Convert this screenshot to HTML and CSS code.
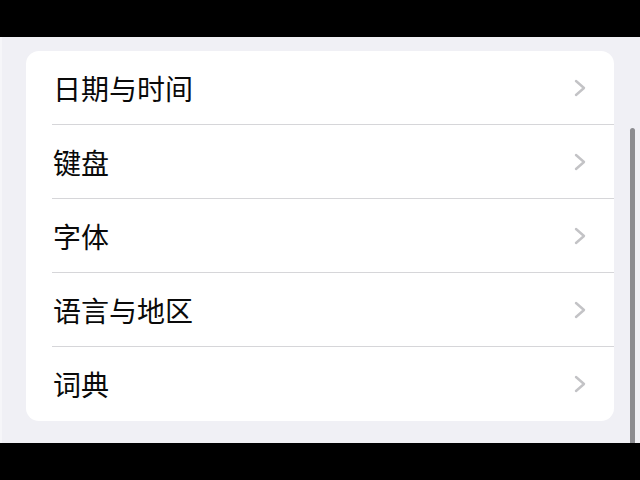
FILE: index.html
```html
<!DOCTYPE html>
<html lang="zh-CN">
<head>
<meta charset="utf-8">
<link rel="stylesheet" href="styles.css">
</head>
<body>
<div class="screen">
  <div class="bar"></div>
  <main class="content">
    <ul class="card">
      <li class="row"><span class="label">日期与时间</span><svg class="chev" viewBox="0 0 12 18"><path d="M2 2 L10 9 L2 16"/></svg></li>
      <li class="row"><span class="label">键盘</span><svg class="chev" viewBox="0 0 12 18"><path d="M2 2 L10 9 L2 16"/></svg></li>
      <li class="row"><span class="label">字体</span><svg class="chev" viewBox="0 0 12 18"><path d="M2 2 L10 9 L2 16"/></svg></li>
      <li class="row"><span class="label">语言与地区</span><svg class="chev" viewBox="0 0 12 18"><path d="M2 2 L10 9 L2 16"/></svg></li>
      <li class="row"><span class="label">词典</span><svg class="chev" viewBox="0 0 12 18"><path d="M2 2 L10 9 L2 16"/></svg></li>
    </ul>
    <div class="scrollbar"></div>
  </main>
  <div class="bar"></div>
</div>
</body>
</html>
```

FILE: styles.css
```css
html, body {
  margin: 0;
  padding: 0;
  background: #000;
}
.screen {
  width: 640px;
  height: 480px;
  display: flex;
  flex-direction: column;
}
.bar {
  height: 37px;
  background: #000;
  flex: none;
}
.content {
  position: relative;
  flex: 1;
  background: #f0f0f5;
  border-left: 2px solid #f6f6f9;
  padding: 14px 0 0 24px;
}
.card {
  list-style: none;
  margin: 0;
  padding: 0;
  width: 588px;
  background: #fff;
  border-radius: 13px;
  overflow: hidden;
}
.row {
  height: 74px;
  margin-left: 26px;
  padding: 0 28px 0 1px;
  display: flex;
  align-items: center;
  justify-content: space-between;
  border-bottom: 1px solid #d6d6d9;
  box-sizing: border-box;
}
.row:last-child {
  border-bottom: none;
}
.label {
  font-family: "Noto Sans CJK SC", "Noto Sans", sans-serif;
  font-size: 28px;
  color: #0a0a0a;
  line-height: 1;
}
.chev {
  width: 12px;
  height: 18px;
  fill: none;
  stroke: #c3c3c6;
  stroke-width: 2.4;
  stroke-linecap: round;
  stroke-linejoin: round;
}
.scrollbar {
  position: absolute;
  left: 628px;
  top: 91px;
  bottom: 0;
  width: 5px;
  background: #8c8c90;
  border-radius: 3px 3px 0 0;
}
```
